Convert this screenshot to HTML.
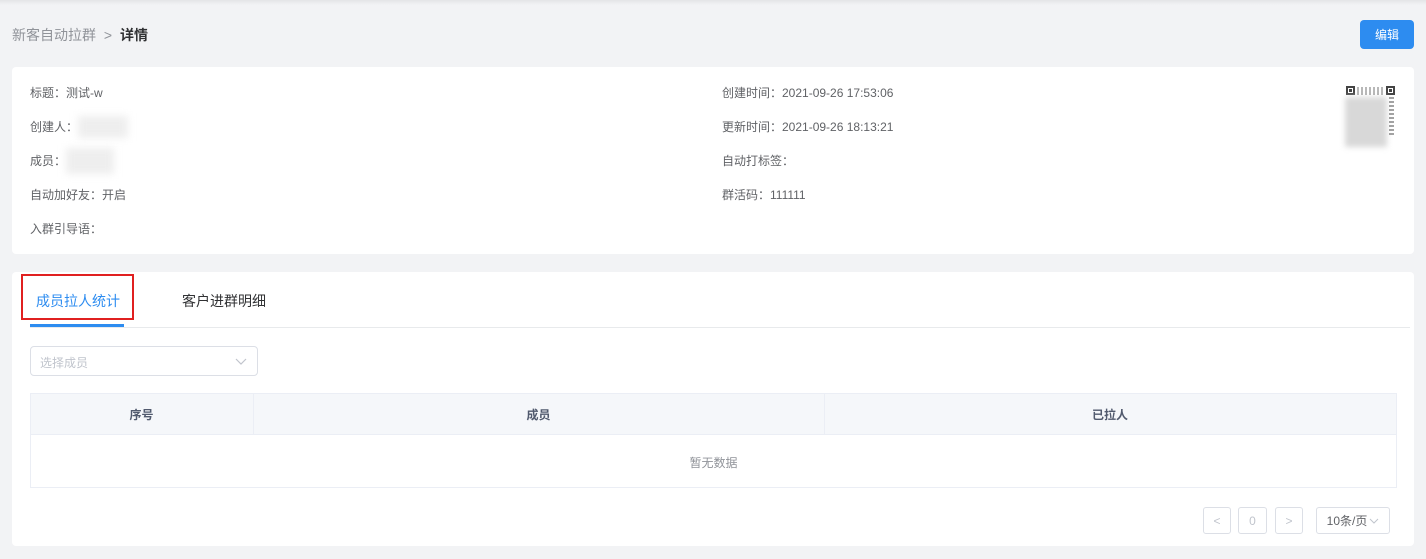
<!DOCTYPE html><html><head><meta charset="utf-8"><style>
*{margin:0;padding:0;box-sizing:border-box}
body{width:1426px;height:559px;background:#f2f3f5;font-family:"Liberation Sans","Noto Sans CJK SC",sans-serif;position:relative;overflow:hidden;font-size:12px;color:#606266}
.a{position:absolute}
.card{position:absolute;background:#fff;border-radius:4px}
.blur{position:absolute;background:#eee;filter:blur(4px)}
.pb{position:absolute;border:1px solid #dcdfe6;border-radius:3px;top:507px;height:27px;color:#c0c4cc;display:flex;align-items:center;justify-content:center}
</style></head><body>
<div class="a" style="left:0;top:0;width:1426px;height:5px;background:linear-gradient(#e4e5e7,#f2f3f5)"></div>
<div class="a" style="left:12px;top:25px;font-size:14px;color:#909399">新客自动拉群 <span style="margin:0 4px">&gt;</span> <b style="color:#303133">详情</b></div>
<div class="a" style="left:1360px;top:20px;width:54px;height:29px;background:#2d8cf0;border-radius:4px;color:#fff;display:flex;align-items:center;justify-content:center;font-size:12px">编辑</div>
<div class="card" style="left:12px;top:67px;width:1402px;height:187px"></div>
<div class="a" style="left:30px;top:84px">标题：测试-w</div>
<div class="a" style="left:30px;top:118px">创建人：</div><div class="blur" style="left:78px;top:116px;width:50px;height:22px"></div>
<div class="a" style="left:30px;top:152px">成员：</div><div class="blur" style="left:66px;top:148px;width:48px;height:26px"></div>
<div class="a" style="left:30px;top:186px">自动加好友：开启</div>
<div class="a" style="left:30px;top:220px">入群引导语：</div>
<div class="a" style="left:722px;top:84px">创建时间：2021-09-26 17:53:06</div>
<div class="a" style="left:722px;top:118px">更新时间：2021-09-26 18:13:21</div>
<div class="a" style="left:722px;top:152px">自动打标签：</div>
<div class="a" style="left:722px;top:186px">群活码：111111</div>
<div class="a" style="left:1346px;top:86px;width:9px;height:9px;border:2px solid #444;background:#fff"><div style="margin:1px;width:3px;height:3px;background:#444"></div></div>
<div class="a" style="left:1386px;top:86px;width:9px;height:9px;border:2px solid #444;background:#fff"><div style="margin:1px;width:3px;height:3px;background:#444"></div></div>
<div class="blur" style="left:1345px;top:97px;width:42px;height:50px;background:#d8d8d8;filter:blur(3px)"></div>
<div class="a" style="left:1357px;top:87px;width:28px;height:8px;background:repeating-linear-gradient(90deg,#888 0 2px,#fff 2px 4px);opacity:.6"></div>
<div class="a" style="left:1389px;top:97px;width:5px;height:38px;background:repeating-linear-gradient(#666 0 2px,#fff 2px 4px);opacity:.6"></div>
<div class="card" style="left:12px;top:272px;width:1402px;height:274px"></div>
<div class="a" style="left:36px;top:291px;font-size:14px;color:#2d8cf0">成员拉人统计</div>
<div class="a" style="left:182px;top:291px;font-size:14px;color:#303133">客户进群明细</div>
<div class="a" style="left:21px;top:274px;width:113px;height:46px;border:2px solid #e02020"></div>
<div class="a" style="left:30px;top:327px;width:1380px;height:1px;background:#e8eaec"></div>
<div class="a" style="left:30px;top:324px;width:94px;height:3px;background:#2d8cf0"></div>
<div class="a" style="left:30px;top:346px;width:228px;height:30px;border:1px solid #dcdfe6;border-radius:4px;color:#c0c4cc;padding:7px 9px">选择成员<svg style="position:absolute;right:10px;top:11px" width="12" height="7" viewBox="0 0 12 7"><path d="M1 1l5 5 5-5" fill="none" stroke="#c0c4cc" stroke-width="1.2"/></svg></div>
<div class="a" style="left:30px;top:393px;width:1367px;height:95px;border:1px solid #ebeef5"></div>
<div class="a" style="left:31px;top:394px;width:1365px;height:41px;background:#f5f7fa;border-bottom:1px solid #ebeef5"></div>
<div class="a" style="left:253px;top:394px;width:1px;height:41px;background:#ebeef5"></div>
<div class="a" style="left:824px;top:394px;width:1px;height:41px;background:#ebeef5"></div>
<div class="a" style="left:30px;top:406px;width:223px;text-align:center;color:#515a6e;font-weight:bold">序号</div>
<div class="a" style="left:253px;top:406px;width:571px;text-align:center;color:#515a6e;font-weight:bold">成员</div>
<div class="a" style="left:824px;top:406px;width:572px;text-align:center;color:#515a6e;font-weight:bold">已拉人</div>
<div class="a" style="left:30px;top:454px;width:1367px;text-align:center;color:#909399">暂无数据</div>
<div class="pb" style="left:1203px;width:28px">&lt;</div>
<div class="pb" style="left:1238px;width:29px">0</div>
<div class="pb" style="left:1275px;width:28px">&gt;</div>
<div class="pb" style="left:1316px;width:74px;color:#606266">10条/页<svg style="margin-left:2px" width="10" height="6" viewBox="0 0 10 6"><path d="M1 1l4 4 4-4" fill="none" stroke="#c0c4cc" stroke-width="1"/></svg></div>
</body></html>
